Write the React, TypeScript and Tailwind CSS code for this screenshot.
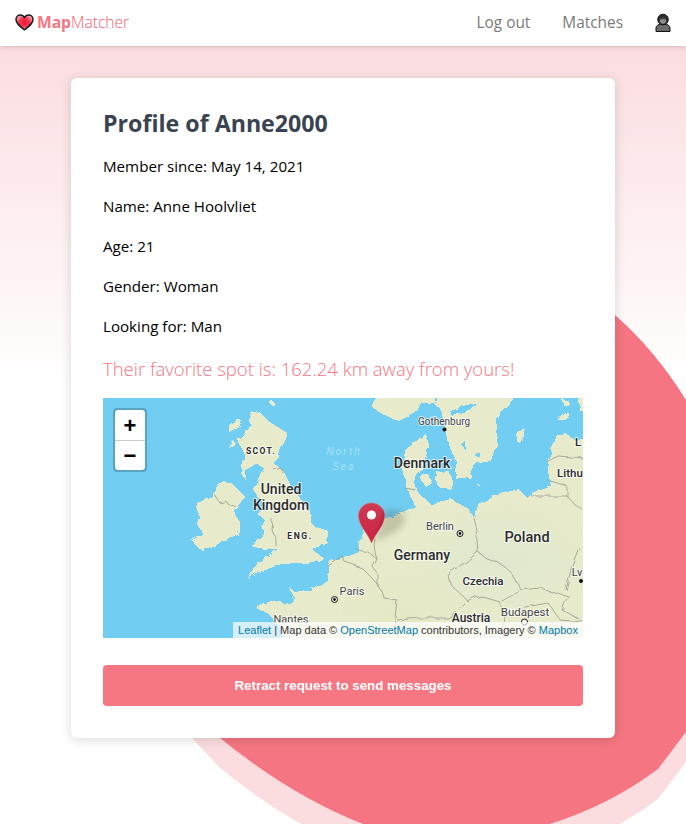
import React from "react";

const sans = { fontFamily: '"Liberation Sans", Arial, sans-serif' };

function Heart() {
  return (
    <svg width="19" height="17" viewBox="0 0 19 17" aria-hidden="true">
      <defs>
        <radialGradient id="hg" cx="0.5" cy="0.5" r="0.55">
          <stop offset="0" stopColor="#f0152f" />
          <stop offset="0.55" stopColor="#f33c55" />
          <stop offset="1" stopColor="#fbb0ba" />
        </radialGradient>
      </defs>
      <path d="M9.5 15.8 C5 12.4 1 9.6 1 5.6 C1 2.8 3 1 5.3 1 C7.2 1 8.7 2 9.5 3.6 C10.3 2 11.8 1 13.7 1 C16 1 18 2.8 18 5.6 C18 9.6 14 12.4 9.5 15.8 Z" fill="url(#hg)" stroke="#1c1c1c" strokeWidth="1.5" strokeLinejoin="round" />
    </svg>
  );
}

function Person() {
  return (
    <svg width="16" height="19" viewBox="0 0 16 19" aria-hidden="true">
      <path d="M1 18.5 L1 15 C1 12.5 3.5 11.5 5.5 11 L10.5 11 C12.5 11.5 15 12.5 15 15 L15 18.5 Z" fill="#6b6b6b" stroke="#111" strokeWidth="1" />
      <circle cx="8" cy="6.5" r="5.3" fill="#2e2e2e" stroke="#111" strokeWidth="1" />
      <ellipse cx="8" cy="7.8" rx="3.2" ry="3" fill="#8a8a8a" />
      <path d="M4.6 7 C5.2 4.6 10.8 4.6 11.4 7 C9.5 5.8 6.5 5.8 4.6 7 Z" fill="#222" />
    </svg>
  );
}

function Blob() {
  const d =
    "M500 250 L615 315 Q655 350 686 400 L720 400 L720 700 L686 732 L658 769 Q610 805 550 824 Q455 850 363 824 Q290 795 220 738 L180 695 Z";
  return (
    <svg className="absolute left-0 top-0" width="686" height="824" viewBox="0 0 686 824" aria-hidden="true">
      <path d={d} transform="translate(0 30)" fill="#fbdde0" />
      <path d={d} fill="#f57682" />
    </svg>
  );
}

const land = "#e7eacb";
const sea = "#72cdf2";
const border = "#a0a194";

function Label({ x, y, size, weight = 500, fill = "#2a2a2a", children, spacing }: { x: number; y: number; size: number; weight?: number; fill?: string; children: React.ReactNode; spacing?: number }) {
  return (
    <text
      x={x}
      y={y}
      textAnchor="middle"
      fontSize={size}
      fontWeight={weight}
      fill={fill}
      stroke="#ffffff"
      strokeOpacity="0.7"
      strokeWidth="2"
      paintOrder="stroke"
      letterSpacing={spacing}
      fontFamily='Roboto, "Liberation Sans", sans-serif'
    >
      {children}
    </text>
  );
}

function MapArt() {
  return (
    <svg className="block" width="480" height="240" viewBox="103 398 480 240" aria-hidden="false">
      <defs>
        <linearGradient id="pin" x1="0" y1="0" x2="0" y2="1">
          <stop offset="0" stopColor="#cf3a52" />
          <stop offset="1" stopColor="#c9243f" />
        </linearGradient>
        <filter id="soft" x="-40%" y="-40%" width="180%" height="180%">
          <feGaussianBlur stdDeviation="3" />
        </filter>
        <filter id="patch" x="-30%" y="-30%" width="160%" height="160%">
          <feGaussianBlur stdDeviation="12" />
        </filter>
        <filter id="rough" x="-5%" y="-5%" width="110%" height="110%">
          <feTurbulence type="fractalNoise" baseFrequency="0.11" numOctaves="3" seed="4" result="n" />
          <feDisplacementMap in="SourceGraphic" in2="n" scale="6" />
        </filter>
        <filter id="wiggle" x="-5%" y="-5%" width="110%" height="110%">
          <feTurbulence type="fractalNoise" baseFrequency="0.09" numOctaves="2" seed="9" result="n" />
          <feDisplacementMap in="SourceGraphic" in2="n" scale="6" />
        </filter>
      </defs>
      <rect x="103" y="398" width="480" height="240" fill={sea} />
      <g filter="url(#rough)" shapeRendering="crispEdges" transform="translate(1 1)">
        {/* Great Britain */}
        <path fill={land} d="M250 412 L257 410 L262 415 L270 422 L287 432 L284 440 L280 448 L275 456 L273 463 L283 470 L290 485 L300 498 L308 510 L310 518 L312 525 L327 530 L326 543 L310 548 L323 557 L313 562 L296 562 L280 563 L267 568 L255 572 L247 577 L253 566 L263 558 L277 548 L263 548 L250 545 L262 538 L263 530 L260 525 L263 518 L257 514 L266 506 L258 498 L252 488 L258 476 L263 467 L255 463 L246 466 L243 452 L239 444 L237 438 L243 432 L248 428 Z" />
        <path fill={land} d="M241 420 L237 428 L229 432 L228 424 L236 418 Z M232 440 L236 444 L228 447 Z M243 456 L247 462 L243 478 L240 472 Z M270 398 L273 402 L271 405 L268 401 Z" />
        {/* Ireland */}
        <path fill={land} d="M223 480 L232 484 L240 492 L243 495 L236 504 L233 510 L238 520 L238 530 L236 535 L227 539 L217 543 L208 548 L203 551 L196 546 L190 538 L196 535 L201 533 L197 524 L199 516 L195 506 L200 500 L210 497 L212 491 L215 484 Z" />
        {/* Continent */}
        <path fill={land} d="M287 648 L278 625 L268 613 L255 607 L262 602 L272 600 L290 603 L293 596 L287 585 L293 590 L310 590 L327 578 L327 563 L340 557 L357 550 L360 540 L365 530 L376 520 L387 518 L400 512 L408 508 L413 504 L410 495 L405 485 L403 472 L400 463 L404 452 L412 442 L425 433 L428 445 L424 458 L418 470 L414 482 L417 492 L430 503 L450 498 L468 508 L473 517 L477 505 L493 495 L517 488 L527 498 L537 488 L550 486 L547 470 L548 461 L552 440 L563 431 L575 440 L600 438 L600 648 Z" />
        {/* Danish islands */}
        <path fill={land} d="M420 472 L428 474 L431 482 L424 485 L420 479 Z M435 471 L448 470 L452 480 L449 488 L438 486 L434 478 Z" />
        {/* Scandinavia */}
        <path fill={land} d="M372 407 L376 385 L520 385 L510 401 L500 410 L495 418 L497 438 L490 460 L473 463 L468 476 L455 478 L455 460 L447 440 L443 425 L440 408 L432 402 L420 402 L415 412 L398 420 L383 414 Z" />
        <path fill={sea} d="M450 410 L462 405 L474 402 L470 408 L458 412 L452 416 Z M461 444 L465 441 L464 449 Z M474 451 L478 451 L478 456 L474 455 Z M431 390 L437 390 L435 404 Z" />
        {/* Baltic islands */}
        <path fill={land} d="M515 440 L517 432 L523 426 L523 432 L518 441 Z M476 482 L479 484 L477 486 Z M558 420 L562 414 L570 411 L569 416 L562 420 Z M562 399 L567 399 L567 404 L562 404 Z M577 390 L600 390 L600 411 L579 410 Z" />
      </g>
      {/* Terrain */}
      <ellipse cx="500" cy="560" rx="60" ry="36" fill="#dfe8cf" opacity="0.7" filter="url(#patch)" />
      <ellipse cx="400" cy="610" rx="40" ry="20" fill="#e6e6c2" opacity="0.7" filter="url(#patch)" />
      {/* Borders */}
      <g fill="none" stroke={border} strokeWidth="0.9" filter="url(#wiggle)">
        <path d="M274 470 L281 468 L283 473" />
        <path d="M273 520 L272 530 L276 540 L276 546" />
        <path d="M215 495 L220 503 L226 501 L230 506 L235 505" />
        <path d="M327 565 L342 556 L345 562 L362 568 L372 578 L378 585 L384 598 L397 600 L395 618 L398 638" />
        <path d="M357 550 L368 552 L376 558 L372 566 L378 574 L378 585" />
        <path d="M376 520 L376 535 L374 545 L376 558" />
        <path d="M405 488 L416 490" />
        <path d="M473 517 L476 530 L478 552 L486 558 L498 562 L511 572 L521 590 L540 588 L568 596 L562 610 L580 620" />
        <path d="M478 552 L466 562 L447 574 L452 586 L465 598 L468 602 L480 596 L500 602 L522 590" />
        <path d="M397 620 L420 618 L448 618 L465 604" />
        <path d="M500 602 L505 622 L502 638" />
        <path d="M532 496 L567 496 L567 486 L547 480" />
        <path d="M548 461 L558 456 L583 458" />
        <path d="M567 496 L575 505 L583 510" />
        <path d="M580 545 L572 565 L566 590" />
        <path d="M520 608 L548 603 L560 620 L583 622" />
      </g>
      {/* Labels */}
      <Label x={261} y={454} size={8.5} weight={700} spacing={1.4}>SCOT.</Label>
      <Label x={281} y={494} size={14}>United</Label>
      <Label x={281} y={510} size={14}>Kingdom</Label>
      <Label x={300} y={539} size={8.5} weight={700} spacing={1.6}>ENG.</Label>
      <text x="344" y="455" textAnchor="middle" fontSize="10.5" fontStyle="italic" fill="#a5dff5" letterSpacing="2" fontFamily="Roboto, sans-serif">North</text>
      <text x="344" y="470" textAnchor="middle" fontSize="10.5" fontStyle="italic" fill="#a5dff5" letterSpacing="2" fontFamily="Roboto, sans-serif">Sea</text>
      <Label x={444} y={425} size={10} weight={400} fill="#444">Gothenburg</Label>
      <circle cx="444.500" cy="429.500" r="2" fill="#111" />
      <Label x={422} y={468} size={14}>Denmark</Label>
      <Label x={440} y={530} size={11} weight={400} fill="#444">Berlin</Label>
      <circle cx="460" cy="533.500" r="3" fill="#fff" stroke="#111" strokeWidth="1" />
      <circle cx="460" cy="533.500" r="1.400" fill="#111" />
      <Label x={527} y={542} size={14.500}>Poland</Label>
      <Label x={422} y={560} size={14}>Germany</Label>
      <Label x={483} y={585} size={11.500}>Czechia</Label>
      <Label x={352} y={595} size={11} weight={400} fill="#444">Paris</Label>
      <circle cx="334.500" cy="599.500" r="3" fill="#fff" stroke="#111" strokeWidth="1" />
      <circle cx="334.500" cy="599.500" r="1.400" fill="#111" />
      <Label x={291} y={623} size={11} weight={400} fill="#444">Nantes</Label>
      <Label x={471} y={622} size={12}>Austria</Label>
      <Label x={525} y={616} size={11.500} weight={400} fill="#444">Budapest</Label>
      <circle cx="524.500" cy="622" r="3" fill="#fff" stroke="#111" strokeWidth="1" />
      <Label x={570} y={477} size={11.500}>Lithu</Label>
      <Label x={578} y={446} size={11.500}>L</Label>
      <Label x={577} y={576} size={11} weight={400} fill="#444">Lv</Label>
      <circle cx="581" cy="581" r="2" fill="#111" />
      {/* Marker */}
      <path d="M374 541 L384 512 C392 506 404 510 405 518 C405 527 392 536 374 541 Z" fill="#54513a" opacity="0.24" filter="url(#soft)" />
      <path d="M371.500 543 C368 533 358.500 526 358.500 515.500 C358.500 508.500 364.500 503 371.500 503 C378.500 503 384.500 508.500 384.500 515.500 C384.500 526 375 533 371.500 543 Z" fill="url(#pin)" stroke="#dc6a7c" strokeWidth="0.7" />
      <path d="M371.500 543 C375 533 384.500 526 384.500 515.500 C384.500 513 383.700 510.700 382.400 508.800 C383 520 376 530 371.500 543 Z" fill="#a81c35" opacity="0.5" />
      <circle cx="371.500" cy="515" r="4.600" fill="#fff" />
    </svg>
  );
}

export default function App() {
  return (
    <div className="relative h-[824px] w-full overflow-hidden bg-white" style={{ fontFamily: '"Open Sans", "Noto Sans", sans-serif' }}>
      <div className="absolute inset-x-0 top-[46px] h-[340px] bg-gradient-to-b from-[#fbdde0] to-white" />
      <Blob />

      <nav className="relative z-10 flex h-[46px] items-center justify-between bg-white pl-[15px] pr-[15px] shadow-[0_2px_4px_rgba(0,0,0,0.12)]">
        <div className="-mt-[1px] flex items-center gap-[3px] text-[15.6px] text-[#f67682]">
          <Heart />
          <span>
            <b className="font-bold">Map</b>
            <span className="font-light text-[#f4606f]">Matcher</span>
          </span>
        </div>
        <div className="flex items-center text-[15.4px] text-[#7a7a7a]">
          <a className="mr-[32px] -mt-[1px]">Log out</a>
          <a className="mr-[32px] -mt-[1px]">Matches</a>
          <span><Person /></span>
        </div>
      </nav>

      <main className="relative z-10 ml-[71px] mt-[32px] w-[544px] rounded-md bg-white p-8 shadow-[0_2px_12px_rgba(10,10,10,0.15)]">
        <h1 className="mb-[16px] h-[28px] text-[23.2px] font-bold leading-[26px] text-[#3a4450]">Profile of Anne2000</h1>
        <div className="flex flex-col gap-4 text-[15.15px] leading-6 text-black">
          <p>Member since: May 14, 2021</p>
          <p>Name: Anne Hoolvliet</p>
          <p>Age: 21</p>
          <p>Gender: Woman</p>
          <p>Looking for: Man</p>
        </div>
        <p className="mt-[16px] text-[18.5px] font-light leading-[30px] text-[#f67682]">Their favorite spot is: 162.24 km away from yours!</p>
        <div className="relative mt-[14px] h-[240px] w-[480px] overflow-hidden" style={sans}>
          <MapArt />
          <div className="absolute left-[10px] top-[10px] w-[34px] rounded border-2 border-black/20 bg-clip-padding">
            <div className="flex h-[31px] w-[30px] items-center justify-center rounded-t-sm border-b border-[#ccc] bg-white text-[22px] font-bold text-black">+</div>
            <div className="flex h-[29px] w-[30px] items-center justify-center rounded-b-sm bg-white text-[22px] font-bold text-black">−</div>
          </div>
          <div className="absolute bottom-0 right-0 bg-white/70 px-[5px] text-[11.03px] leading-[16px] text-[#333]">
            <a className="text-[#0078a8]">Leaflet</a> | Map data © <a className="text-[#0078a8]">OpenStreetMap</a> contributors, Imagery © <a className="text-[#0078a8]">Mapbox</a>
          </div>
        </div>
        <button className="mt-[27px] block h-[41px] w-[480px] rounded bg-[#f67682] text-[13.33px] font-bold text-white" style={sans}>
          Retract request to send messages
        </button>
      </main>
    </div>
  );
}
